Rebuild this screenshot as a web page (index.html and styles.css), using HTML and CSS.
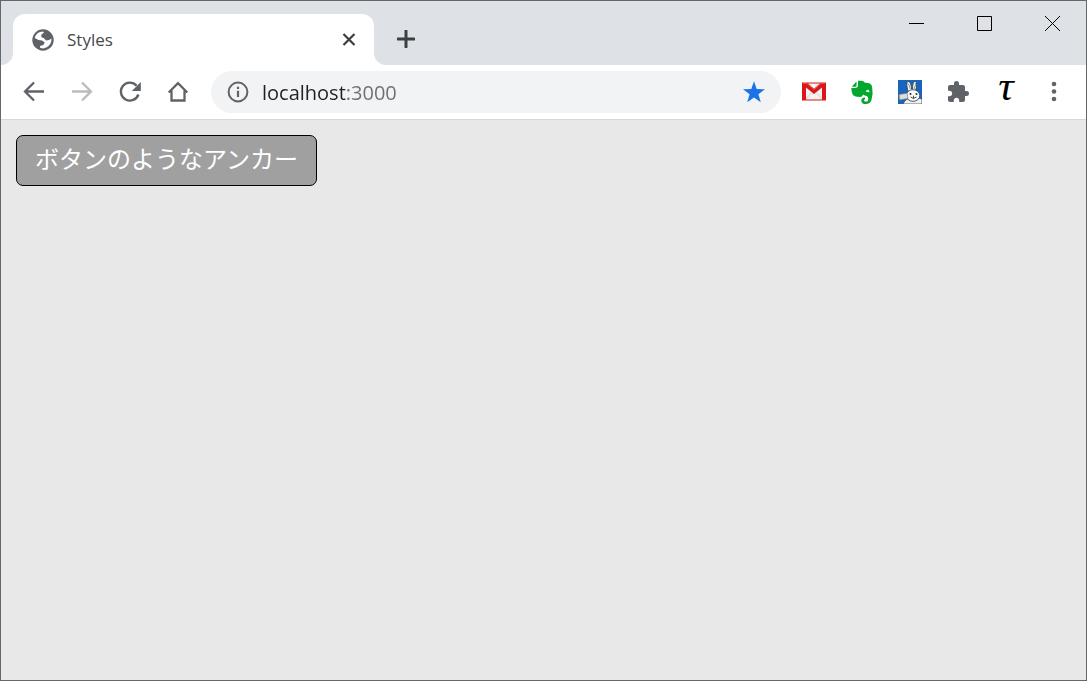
FILE: index.html
```html
<!DOCTYPE html>
<html lang="ja">

<head>
    <meta charset="UTF-8">
    <meta name="viewport" content="width=device-width, initial-scale=1.0">
    <title>Styles</title>
    <link rel="stylesheet" href="styles.css">
</head>

<body>

    <div class="window">
        <header class="tab-strip">
            <div class="tab-lead"></div>
            <div class="tab-holder">
                <div class="tab">
                    <svg class="favicon" viewBox="0 0 22 22" aria-hidden="true">
                        <circle cx="11" cy="11" r="10.7" fill="#5f6368" />
                        <path d="M2.8 9 C3.6 5.2 7 2.7 11 2.6 L12 3.6 L9.3 5.8 V8 L12.3 9.6 L14 11.4 L17 11 L19.4 9.6 C20 14 16.5 19 11 19.5 L8 18.8 V17 L11.3 16 L12.8 13.6 L10 11.4 L6.5 11Z" fill="#fff" />
                    </svg>
                    <span class="tab-title">Styles</span>
                    <button class="tab-close" type="button" aria-label="Close tab">
                        <svg width="14" height="14" viewBox="0 0 14 14"><path d="M1.5 1 L12.5 12 M12.5 1 L1.5 12" fill="none" stroke="#3c4043" stroke-width="2.2" /></svg>
                    </button>
                </div>
            </div>
            <div class="tab-rest">
                <button class="new-tab" type="button" aria-label="New tab">
                    <svg width="18" height="18" viewBox="0 0 18 18"><path d="M9 1 V17 M1 9 H17" fill="none" stroke="#3c4043" stroke-width="3" stroke-linecap="round" /></svg>
                </button>
                <div class="window-controls">
                    <button type="button" aria-label="Minimize">
                        <svg width="15" height="15" viewBox="0 0 15 15"><path d="M0 7.5 H15" stroke="#000" /></svg>
                    </button>
                    <button type="button" aria-label="Maximize">
                        <svg width="15" height="15" viewBox="0 0 15 15"><path d="M.5 .5 H14.5 V14.5 H.5Z" fill="none" stroke="#000" /></svg>
                    </button>
                    <button type="button" aria-label="Close">
                        <svg width="15" height="15" viewBox="0 0 15 15"><path d="M0 0 L15 15 M15 0 L0 15" stroke="#000" /></svg>
                    </button>
                </div>
            </div>
        </header>

        <nav class="toolbar">
            <button type="button" aria-label="Back">
                <svg width="24" height="24" viewBox="0 0 24 24"><path d="M22 11.5 H3.5 M12 2.5 L3 11.5 L12 20.5" fill="none" stroke="#5f6368" stroke-width="2.3" /></svg>
            </button>
            <button type="button" aria-label="Forward">
                <svg width="24" height="24" viewBox="0 0 24 24"><path d="M2 11.5 H20.5 M12 2.5 L21 11.5 L12 20.5" fill="none" stroke="#babcbe" stroke-width="2.3" /></svg>
            </button>
            <button type="button" aria-label="Reload">
                <svg width="24" height="24" viewBox="0 0 24 24"><path d="M20.4 14.5 A9 9 0 1 1 18.6 5.6" fill="none" stroke="#5f6368" stroke-width="2.4" /><path d="M22.8 2 V11 H13.8Z" fill="#5f6368" /></svg>
            </button>
            <button type="button" aria-label="Home">
                <svg width="24" height="24" viewBox="0 0 24 24"><path d="M2.7 12.5 L12 3.2 L21.3 12.5 M5.5 10.5 V20.5 H18.5 V10.5" fill="none" stroke="#5f6368" stroke-width="2.3" /></svg>
            </button>

            <div class="address-bar">
                <svg width="22" height="22" viewBox="0 0 22 22" aria-hidden="true"><circle cx="11" cy="11" r="9.4" fill="none" stroke="#5f6368" stroke-width="2" /><path d="M11 9.7 V16 M11 5.8 V8" stroke="#5f6368" stroke-width="2.2" /></svg>
                <input class="address" type="text" value="localhost:3000" aria-label="Address">
                <button class="bookmark" type="button" aria-label="Bookmark this page">
                    <svg width="24" height="24" viewBox="0 0 24 24"><path d="M12 1.2 L14.7 9 L23 9.2 L16.4 14.2 L18.8 22.3 L12 17.5 L5.2 22.3 L7.6 14.2 L1 9.2 L9.3 9Z" fill="#1a73e8" /></svg>
                </button>
            </div>

            <button type="button" aria-label="Gmail">
                <svg width="24" height="24" viewBox="0 0 24 24">
                    <path d="M0 2.5 H24 V20.5 H0Z" fill="#d9171b" />
                    <path d="M4 7.5 L12 14 L20 7.5 V19.5 H4Z" fill="#f5f1f0" />
                    <path d="M6 3.5 H18 L12 8.8Z" fill="#f8f3f2" />
                    <path d="M4 19 L9.5 12.7 M20 19 L14.5 12.7" stroke="#d5cfcc" />
                    <path d="M1 3.5 H5 L12 9.7 L19 3.5 H23" fill="none" stroke="#e65a58" stroke-width=".8" />
                </svg>
            </button>
            <button type="button" aria-label="Evernote">
                <svg width="24" height="24" viewBox="0 0 24 24">
                    <path d="M6.5 1.5 V5.5 Q6.5 6.7 5.3 6.7 H1.8Z" fill="#00a82d" />
                    <path d="M8 .8 H11 Q14 .7 14.5 2.5 L19 3.2 Q21.5 3.6 22.2 7.5 Q23.4 14 21.4 20.2 Q19.8 24 16 24 Q11.3 24 11.3 20.4 Q11.6 17.6 15 17.6 V19.6 Q13.7 19.6 13.9 20.6 Q14.2 21.7 16 21.6 Q18.5 21.3 18.3 18.4 Q17.8 15.8 14.6 15.6 L13.2 14.5 Q12.3 17.2 9.4 17 Q4.8 16.7 3.2 15.2 Q1.6 13.3 1.3 8 H5.4 Q8 7.9 8 5.5Z" fill="#00a82d" />
                    <path d="M15.8 12 Q16.4 9.4 18.2 9.7 Q19.6 10 19.5 12.6 Q17.6 11.5 15.8 12Z" fill="#fff" />
                </svg>
            </button>
            <button type="button" aria-label="Rabbit">
                <svg width="24" height="24" viewBox="0 0 24 24">
                    <path d="M0 0 H24 V24 H0Z" fill="#1765bd" />
                    <path d="M5 24 Q8 18 12 19 H19 Q23 17 24 20 V24Z" fill="#eee" stroke="#31404f" stroke-width=".7" />
                    <path d="M10.3 12 Q7.5 3 10 1.3 Q12.8 1.3 13.6 9 L14.5 9 Q14.5 1.5 17.2 1.2 Q20 2.5 17.5 11Z" fill="#f7f7f3" stroke="#34475d" stroke-width=".9" />
                    <path d="M10.3 3.5 L12.3 9 M17.6 3 Q17.6 6 16 9" fill="none" stroke="#767d84" stroke-width=".8" />
                    <ellipse cx="15" cy="15.5" rx="6.8" ry="5.8" fill="#fbfbf7" stroke="#34475d" stroke-width=".9" />
                    <path d="M1 14.5 L9 13.2 L10 18.5 L1.5 20Z" fill="#ddd" stroke="#777" stroke-width=".7" />
                    <circle cx="12.5" cy="14" r="1" fill="#252a2e" />
                    <circle cx="18.5" cy="14" r="1" fill="#252a2e" />
                    <path d="M12.5 17 Q15.5 20 18.5 17 M15.5 15.7 V18" fill="none" stroke="#333" stroke-width=".9" />
                </svg>
            </button>
            <button type="button" aria-label="Extensions">
                <svg width="24" height="24" viewBox="0 0 24 24"><path d="M20.5 11H19V7c0-1.1-.9-2-2-2h-4V3.5a2.5 2.5 0 0 0-5 0V5H4c-1.1 0-1.99.9-1.99 2v3.8H3.5c1.49 0 2.7 1.21 2.7 2.7s-1.21 2.7-2.7 2.7H2V20c0 1.1.9 2 2 2h3.8v-1.5c0-1.49 1.21-2.7 2.7-2.7s2.7 1.21 2.7 2.7V22H17c1.1 0 2-.9 2-2v-4h1.5a2.5 2.5 0 0 0 0-5z" fill="#5f6368" /></svg>
            </button>
            <button class="tau" type="button">τ</button>
            <button type="button" aria-label="Menu">
                <svg width="24" height="24" viewBox="0 0 24 24"><g fill="#5f6368"><circle cx="12" cy="4" r="2.3" /><circle cx="12" cy="11.5" r="2.3" /><circle cx="12" cy="19" r="2.3" /></g></svg>
            </button>
        </nav>

        <main class="page">
            <a class="anchor-button" href="#">ボタンのようなアンカー</a>
        </main>
    </div>

</body>

</html>
```

FILE: styles.css
```css
body {
    margin: 0;
    font-family: "Open Sans", "Noto Sans CJK JP", sans-serif;
}

.window {
    display: flex;
    flex-direction: column;
    min-height: 100vh;
    box-sizing: border-box;
    border: 1px solid #66676b;
    background-color: #fff;
}

button {
    display: flex;
    align-items: center;
    justify-content: center;
    padding: 0;
    border: none;
    background: none;
    cursor: pointer;
}

/* tab strip */
.tab-strip {
    display: flex;
    height: 64px;
}

.tab-lead {
    width: 12px;
    background-color: #dee1e6;
    border-bottom-right-radius: 12px;
}

.tab-holder {
    flex: 0 1 361px;
    padding-top: 13px;
    box-sizing: border-box;
    background: linear-gradient(#dee1e6 32px, #fff 32px);
}

.tab {
    display: flex;
    align-items: center;
    height: 51px;
    padding: 0 16px 0 19px;
    box-sizing: border-box;
    border-radius: 12px 12px 0 0;
    background-color: #fff;
}

.favicon {
    width: 22px;
    height: 22px;
}

.tab-title {
    flex: 1;
    margin-left: 13px;
    font-size: 17px;
    color: #45484c;
}

.tab-close {
    width: 18px;
    height: 18px;
}

.tab-rest {
    flex: 1;
    display: flex;
    justify-content: space-between;
    background-color: #dee1e6;
    border-bottom-left-radius: 12px;
}

.new-tab {
    width: 36px;
    height: 36px;
    margin: 20px 0 0 14px;
}

.window-controls {
    display: flex;
}

.window-controls button {
    width: 68px;
    height: 45px;
}

/* toolbar */
.toolbar {
    display: flex;
    align-items: center;
    height: 54px;
    padding: 0 8px 0 9px;
    border-bottom: 1px solid #d8d8d8;
}

.toolbar > button {
    flex: 0 0 48px;
    height: 48px;
}

.toolbar .tau {
    color: #000;
    font-family: "Liberation Serif", serif;
    font-size: 43px;
    font-style: italic;
    line-height: 32px;
    padding-bottom: 12px;
}

.address-bar {
    flex: 1;
    display: flex;
    align-items: center;
    height: 42px;
    min-width: 0;
    margin: 0 9px;
    padding: 0 15px 0 16px;
    box-sizing: border-box;
    border-radius: 21px;
    background-color: #f1f3f4;
}

.address {
    flex: 1;
    min-width: 0;
    height: 32px;
    margin-left: 13px;
    padding: 0;
    border: none;
    outline: none;
    font-family: inherit;
    font-size: 20px;
    /* host is dark, port is grey */
    color: transparent;
    caret-color: #202124;
    background: linear-gradient(to right, #202124 84px, #6b6f73 84px);
    -webkit-background-clip: text;
    background-clip: text;
}

/* page */
.page {
    flex: 1;
    padding: 15px;
    background-color: #e8e8e8;
}

.anchor-button {
    display: inline-block;
    padding: 4px 18px 9px;
    border: 1px solid #000;
    border-radius: 7px;
    background-color: #a0a0a0;
    color: #fff;
    font-family: "Noto Sans CJK JP", sans-serif;
    font-size: 24px;
    line-height: 36px;
    text-decoration: none;
}
```
